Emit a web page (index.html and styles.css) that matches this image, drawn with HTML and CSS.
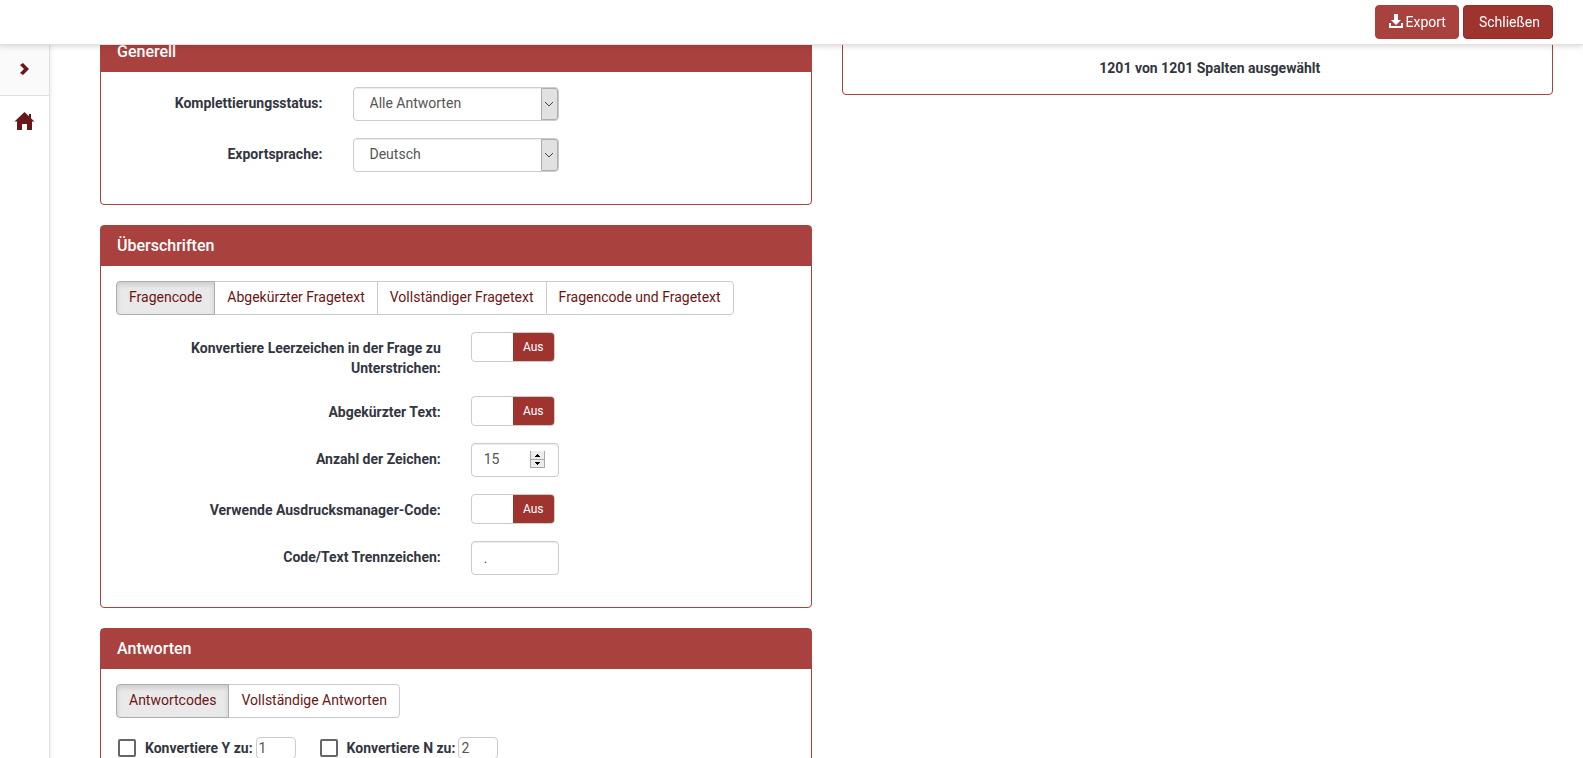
FILE: index.html
```html
<!DOCTYPE html>
<html lang="de">
<head>
<meta charset="utf-8">
<title>Export</title>
<link rel="stylesheet" href="styles.css">
</head>
<body>
<div class="app">
  <header class="topbar">
    <button type="button" class="btn btn-primary">
      <svg class="icon-save" viewBox="0 0 14 16" aria-hidden="true"><path d="M5 0h4v6h3L7 11 2 6h3zM0 9h2v3h10V9h2v5H0z"/></svg>
      Export
    </button>
    <button type="button" class="btn btn-danger">Schließen</button>
  </header>

  <nav class="sidebar" aria-label="Seitenleiste">
    <button type="button" class="side-toggle" aria-label="Ausklappen">
      <svg class="icon-chevron" viewBox="0 0 10 14" aria-hidden="true"><path d="M3 0l6 6-6 6-3-2 4-4-4-4z"/></svg>
    </button>
    <a class="side-link" href="#" aria-label="Startseite">
      <svg class="icon-home" viewBox="0 0 20 20" aria-hidden="true"><path d="M9.500 0l4.500 4.300V2h2v4.200l3.500 3.300h-2.500V18h-5v-6H7v6H2V9.500H-.5z"/></svg>
    </a>
  </nav>

  <main class="content">
    <div class="column">
      <section class="panel">
        <h2 class="panel-heading">Generell</h2>
        <div class="panel-body">
          <div class="form-row">
            <label class="label label-narrow" for="status">Komplettierungsstatus:</label>
            <div class="select-wrap">
              <select id="status" class="control select"><option>Alle Antworten</option></select>
              <span class="select-arrow"><svg viewBox="0 0 10 6" aria-hidden="true"><path d="M1 1l4 4 4-4"/></svg></span>
            </div>
          </div>
          <div class="form-row">
            <label class="label label-narrow" for="sprache">Exportsprache:</label>
            <div class="select-wrap">
              <select id="sprache" class="control select"><option>Deutsch</option></select>
              <span class="select-arrow"><svg viewBox="0 0 10 6" aria-hidden="true"><path d="M1 1l4 4 4-4"/></svg></span>
            </div>
          </div>
        </div>
      </section>

      <section class="panel">
        <h2 class="panel-heading">Überschriften</h2>
        <div class="panel-body">
          <div class="btn-group">
            <button type="button" class="btn btn-default active">Fragencode</button>
            <button type="button" class="btn btn-default">Abgekürzter Fragetext</button>
            <button type="button" class="btn btn-default">Vollständiger Fragetext</button>
            <button type="button" class="btn btn-default">Fragencode und Fragetext</button>
          </div>
          <div class="form-row">
            <label class="label" for="leerzeichen">Konvertiere Leerzeichen in der Frage zu Unterstrichen:</label>
            <button type="button" id="leerzeichen" class="switch" role="switch" aria-checked="false"><span class="switch-off">Aus</span></button>
          </div>
          <div class="form-row">
            <label class="label" for="abgekuerzt">Abgekürzter Text:</label>
            <button type="button" id="abgekuerzt" class="switch" role="switch" aria-checked="false"><span class="switch-off">Aus</span></button>
          </div>
          <div class="form-row">
            <label class="label" for="anzahl">Anzahl der Zeichen:</label>
            <div class="number-wrap">
              <input id="anzahl" class="control number" type="number" value="15">
              <span class="spinner" aria-hidden="true">
                <svg viewBox="0 0 15 17"><path class="spin-face" d="M0 0h15v8H0zM0 9h15v8H0z"/><path class="spin-edge" d="M0 8h15v1H0zM0 16h15v1H0zM0 0h1v17H0zM14 0h1v17h-1z"/><path d="M7 3h1v1h1v1h1v1H5V5h1V4h1zM5 11h5v1H9v1H8v1H7v-1H6v-1H5z"/></svg>
              </span>
            </div>
          </div>
          <div class="form-row">
            <label class="label" for="manager">Verwende Ausdrucksmanager-Code:</label>
            <button type="button" id="manager" class="switch" role="switch" aria-checked="false"><span class="switch-off">Aus</span></button>
          </div>
          <div class="form-row">
            <label class="label" for="trenner">Code/Text Trennzeichen:</label>
            <input id="trenner" class="control small" type="text" value=".">
          </div>
        </div>
      </section>

      <section class="panel">
        <h2 class="panel-heading">Antworten</h2>
        <div class="panel-body">
          <div class="btn-group">
            <button type="button" class="btn btn-default active">Antwortcodes</button>
            <button type="button" class="btn btn-default">Vollständige Antworten</button>
          </div>
          <div class="check-row">
            <div class="check-item">
              <input type="checkbox" class="checkbox" id="convy">
              <label class="check-label" for="convy">Konvertiere Y zu:</label>
              <input type="text" class="mini" value="1" aria-label="Wert für Y">
            </div>
            <div class="check-item">
              <input type="checkbox" class="checkbox" id="convn">
              <label class="check-label" for="convn">Konvertiere N zu:</label>
              <input type="text" class="mini" value="2" aria-label="Wert für N">
            </div>
          </div>
        </div>
      </section>
    </div>

    <div class="column">
      <section class="panel">
        <div class="panel-body summary"><strong>1201 von 1201 Spalten ausgewählt</strong></div>
      </section>
    </div>
  </main>
</div>
</body>
</html>
```
FILE: styles.css
```css
* {
  box-sizing: border-box;
}

body {
  margin: 0;
  background: #fff;
  color: #333641;
  font: 14px/20px Roboto, "Liberation Sans", sans-serif;
}

button,
input,
select {
  margin: 0;
  font: inherit;
}

.app {
  display: grid;
  grid-template-columns: 50px 1fr;
  height: 100vh;
  overflow: hidden;
}

.topbar {
  position: fixed;
  z-index: 2;
  top: 0;
  left: 0;
  right: 0;
  display: flex;
  justify-content: flex-end;
  gap: 4px;
  padding: 5px 30px;
  border-bottom: 1px solid #e2e0e1;
  background: #fff;
  box-shadow: 0 1px 6px rgba(60, 30, 30, 0.2);
}

.btn {
  display: flex;
  align-items: center;
  gap: 3px;
  height: 34px;
  padding: 0 12px;
  border: 1px solid #ccc;
  border-radius: 4px;
  background: #fff;
  color: #6a1614;
  white-space: nowrap;
}

.btn-primary {
  padding-left: 13px;
  border-color: #a9423f;
  background: #a9423f;
  color: #fff;
}

.btn-danger {
  padding-left: 15px;
  border-color: #8d2e2a;
  background: #9f342f;
  color: #fff;
}

.icon-save {
  width: 14px;
  height: 16px;
  fill: #fff;
}

.sidebar {
  padding-top: 45px;
  border-right: 1px solid #dfdfdf;
  box-shadow: 1px 0 5px rgba(0, 0, 0, 0.08);
}

.side-toggle,
.side-link {
  display: flex;
  align-items: center;
  justify-content: center;
  width: 100%;
  height: 51px;
}

.side-toggle {
  padding: 0;
  border: 0;
  border-bottom: 1px solid #dfdfdf;
  background: #fafafa;
}

.sidebar svg {
  fill: #681818;
}

.icon-chevron {
  width: 10px;
  height: 14px;
}

.icon-home {
  width: 20px;
  height: 20px;
  overflow: visible;
}

.content {
  display: grid;
  grid-template-columns: 1fr 1fr;
  align-items: start;
  gap: 30px;
  padding: 31px 30px 0 50px;
}

.panel {
  margin-bottom: 20px;
  border: 1px solid #a9423f;
  border-radius: 4px;
}

.panel-heading {
  margin: 0;
  padding: 10px 16px;
  background: #a9423f;
  color: #fff;
  font-size: 16px;
  font-weight: 500;
  line-height: 20px;
}

.panel-body {
  padding: 15px;
}

.form-row {
  display: grid;
  grid-template-columns: repeat(12, 1fr);
  column-gap: 30px;
  align-items: start;
  margin-bottom: 17px;
}

.label {
  grid-column: span 6;
  padding-top: 6px;
  padding-bottom: 1px;
  font-weight: 700;
  text-align: right;
}

.label-narrow {
  grid-column: span 4;
}

.control {
  width: 100%;
  height: 34px;
  padding: 0 12px;
  border: 1px solid #ccc;
  border-radius: 4px;
  background: #fff;
  box-shadow: inset 0 1px 1px rgba(0, 0, 0, 0.08);
  color: #555;
}

.select-wrap,
.number-wrap {
  position: relative;
  display: flex;
}

.select-wrap {
  grid-column: span 4;
}

.select {
  padding: 0 30px 2px 16px;
  appearance: none;
}

.select-arrow {
  position: absolute;
  top: 1px;
  right: 1px;
  bottom: 1px;
  display: flex;
  align-items: center;
  justify-content: center;
  width: 17px;
  padding-right: 1px;
  border: 1px solid #adadad;
  border-radius: 0 3px 3px 0;
  background: #e1e1e1;
  pointer-events: none;
}

.select-arrow svg {
  width: 10px;
  height: 6px;
  fill: none;
  stroke: #444;
}

.number-wrap,
.small {
  grid-column: span 2;
}

.number {
  padding-bottom: 2px;
  appearance: textfield;
}

.number::-webkit-inner-spin-button {
  appearance: none;
}

.spinner {
  position: absolute;
  top: 8px;
  right: 14px;
  width: 15px;
  height: 17px;
  pointer-events: none;
}

.spinner svg {
  display: block;
}

.spin-face {
  fill: #ececec;
}

.spin-edge {
  fill: #a8a8a8;
}

.switch {
  grid-column: span 2;
  display: flex;
  justify-content: flex-end;
  width: 84px;
  height: 30px;
  padding: 0;
  overflow: hidden;
  border: 1px solid #ccc;
  border-radius: 4px;
  background: #fff;
}

.switch-off {
  width: 41px;
  background: #9f342f;
  color: #fff;
  font-size: 12px;
  line-height: 28px;
  text-align: center;
}

.btn-group {
  display: flex;
  margin-bottom: 17px;
}

.btn-group .btn {
  padding-bottom: 2px;
  border-radius: 0;
}

.btn-group .btn + .btn {
  margin-left: -1px;
}

.btn-group .btn:first-child {
  border-radius: 4px 0 0 4px;
}

.btn-group .btn:last-child {
  border-radius: 0 4px 4px 0;
}

.btn-group .active {
  z-index: 1;
  border-color: #adadad;
  background: #e9e9e9;
  box-shadow: inset 0 3px 5px rgba(0, 0, 0, 0.125);
}

.check-row {
  display: flex;
  gap: 24px;
  padding: 2px;
}

.check-item {
  display: flex;
  align-items: center;
}

.checkbox {
  width: 18px;
  height: 18px;
  margin-right: 9px;
  appearance: none;
  border: 2px solid #666;
  border-radius: 2px;
}

.check-label {
  margin-right: 3px;
  font-weight: 700;
}

.mini {
  width: 40px;
  height: 22px;
  padding: 0 2px;
  border: 1px solid #ccc;
  border-radius: 4px;
  color: #555;
}

.summary {
  padding: 26px 15px 16px 40px;
  text-align: center;
}
```
